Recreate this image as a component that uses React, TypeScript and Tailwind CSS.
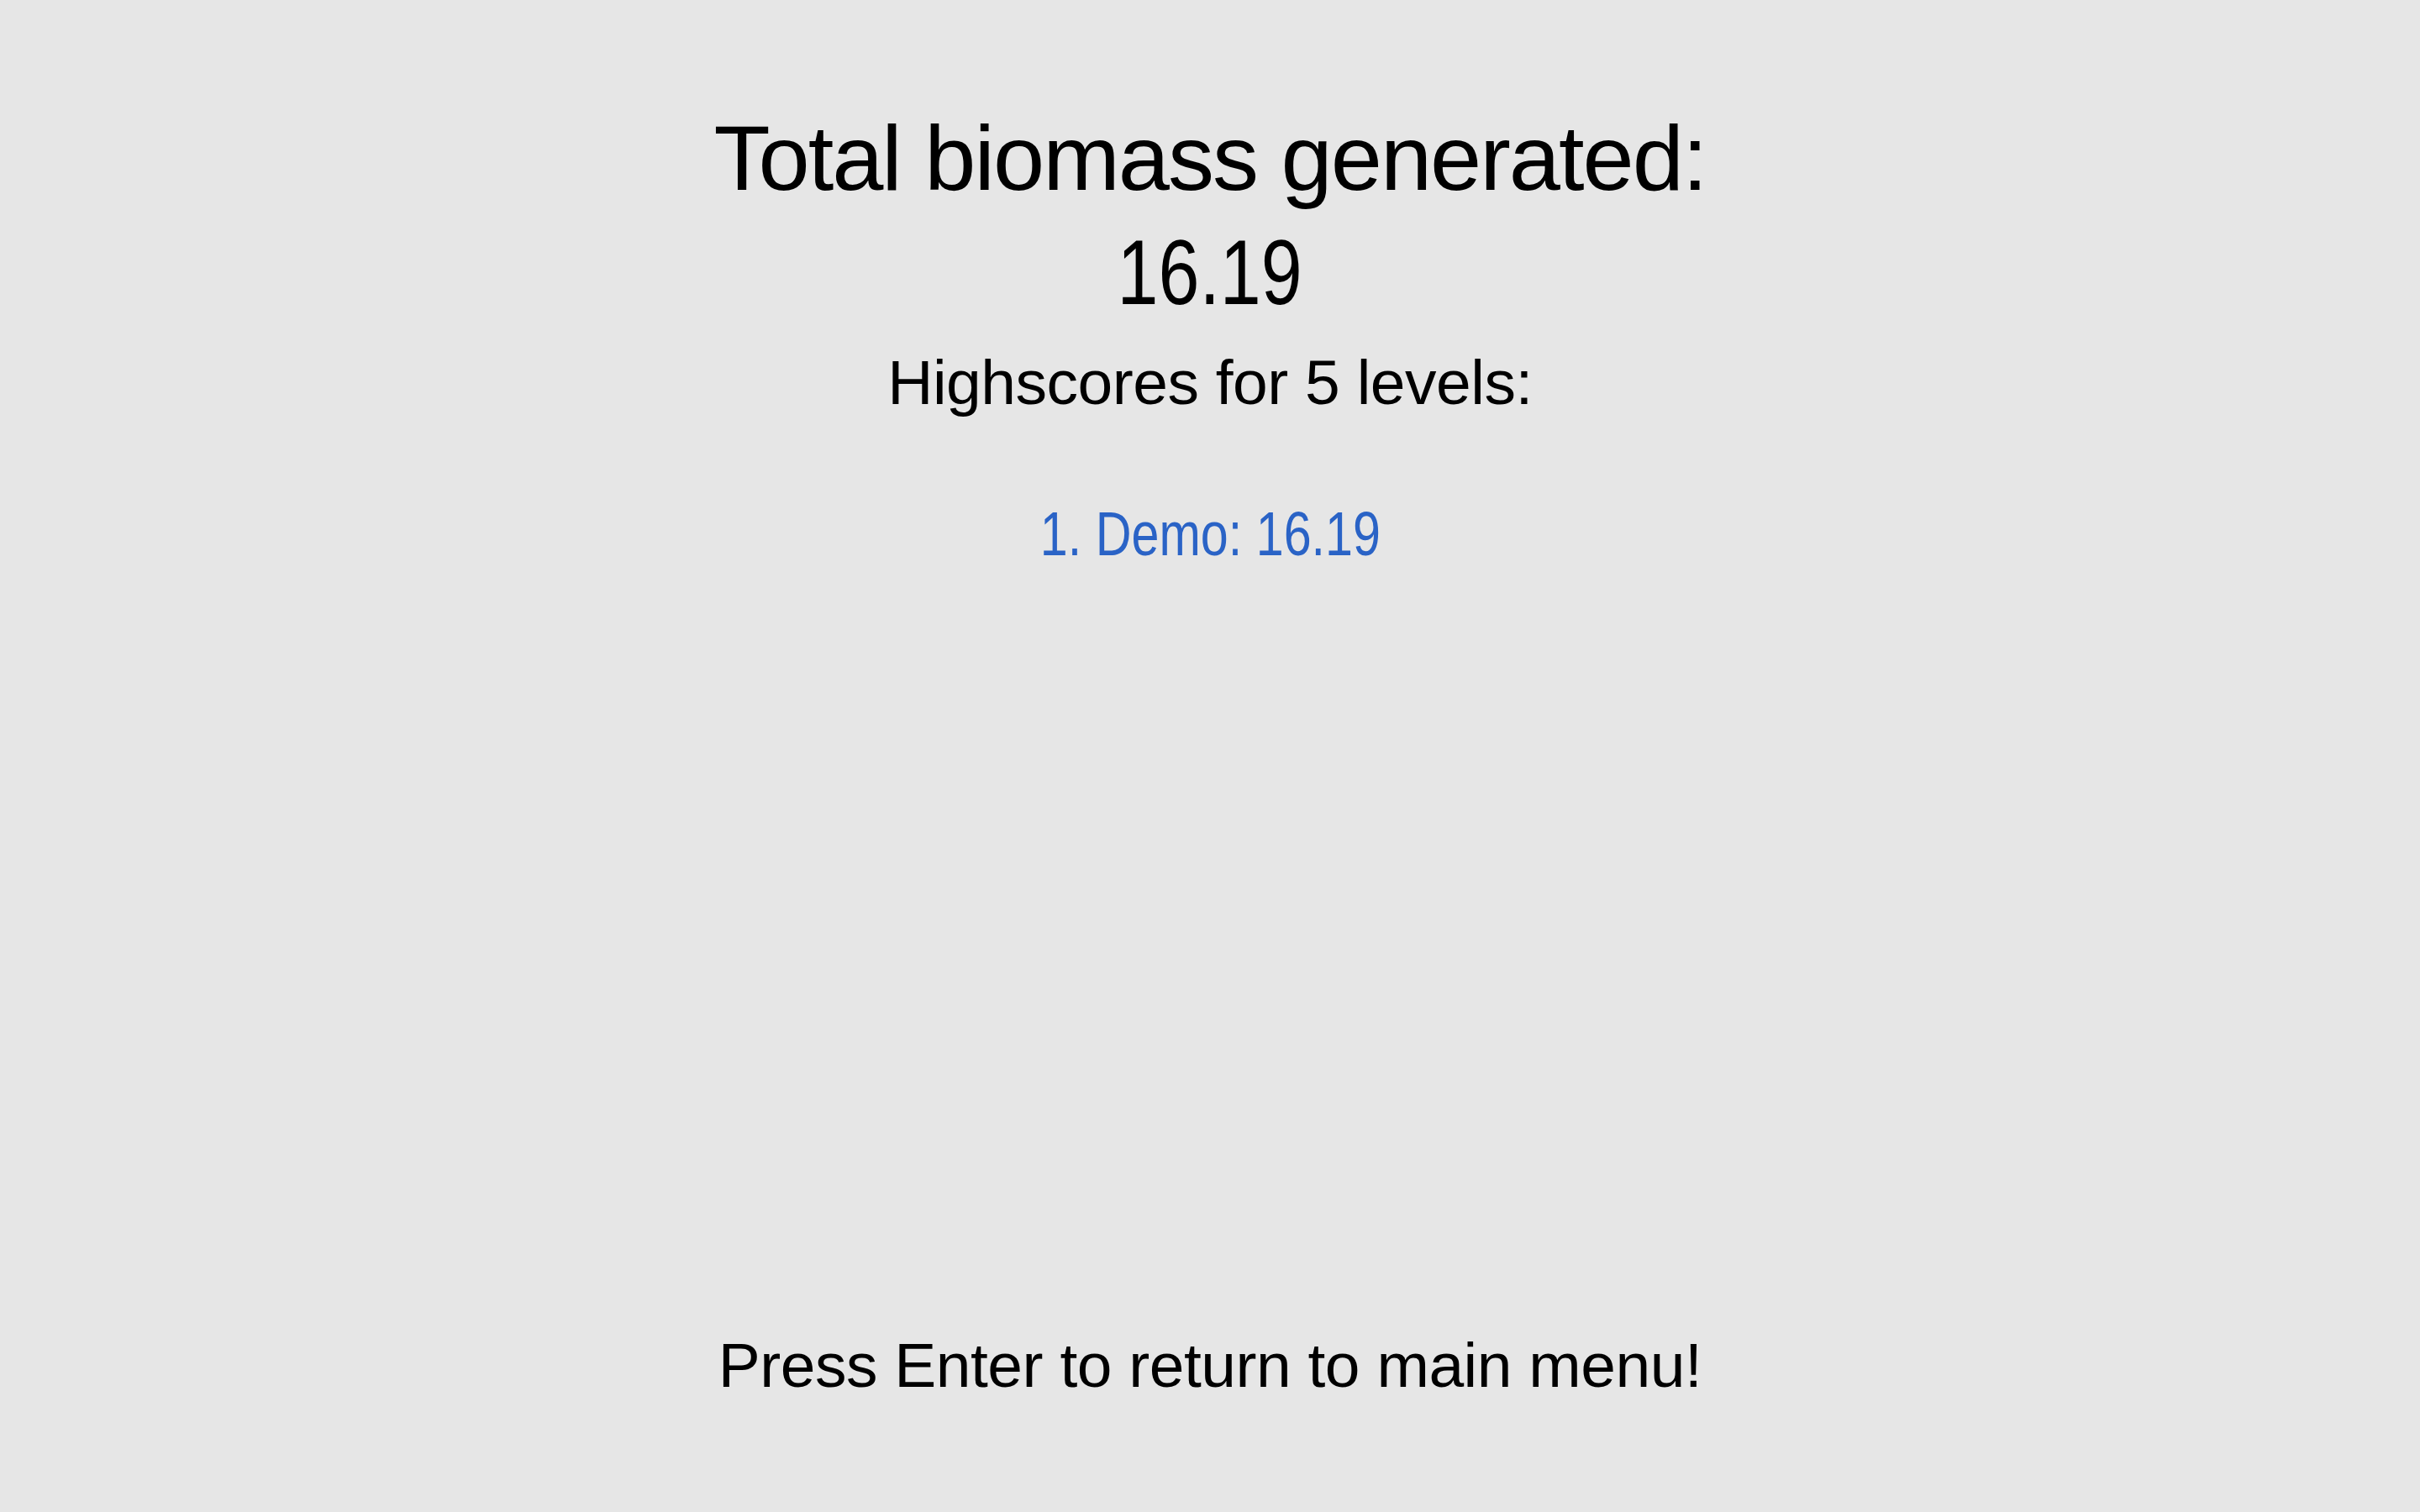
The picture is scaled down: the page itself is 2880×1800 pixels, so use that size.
export default function App() {
  return (
    <div className="h-screen w-full bg-[#e6e6e6] text-black font-['Liberation_Sans',Arial,sans-serif] flex flex-col items-center pt-[120px] pb-[137px]">
      <h1 className="text-[110px] leading-[136px] font-normal text-center">
        <div className="tracking-[-2px]">Total biomass generated:</div>
        <div>
          <span className="inline-block scale-x-[0.8]">16.19</span>
        </div>
      </h1>
      <p className="mt-[26px] text-[75px] leading-[75px] tracking-[-0.5px]">
        Highscores for 5 levels:
      </p>
      <ol className="mt-[105px] text-[75px] leading-[75px] text-[#2a63c6]">
        <li className="inline-block scale-x-[0.79]">1. Demo: 16.19</li>
      </ol>
      <p className="mt-auto text-[75px] leading-[75px] tracking-[-0.5px]">
        Press Enter to return to main menu!
      </p>
    </div>
  );
}
